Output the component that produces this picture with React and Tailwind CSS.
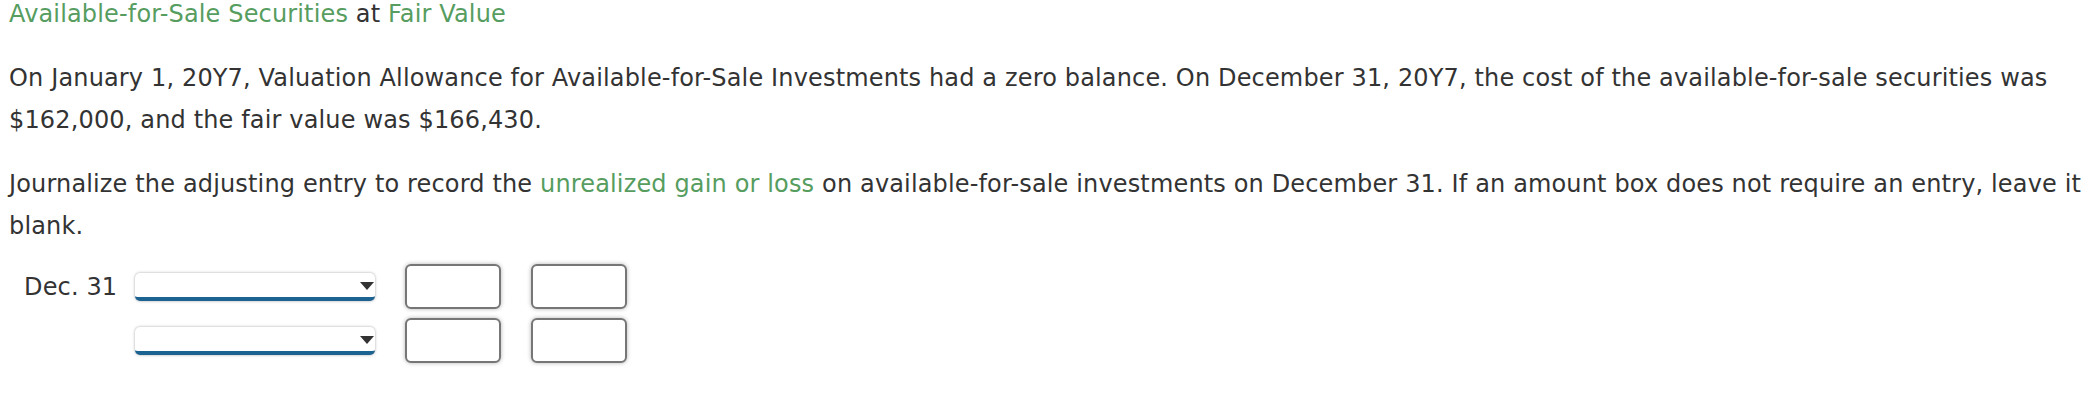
import { useState } from "react";

const green = "text-[#569d5f]";

function AccountSelect() {
  return (
    <div className="relative h-[28px] w-[240px] rounded-[5px] border-b-4 border-[#1c6392] bg-white shadow-[0_0_3px_rgba(0,0,0,0.35)]">
      <span className="absolute right-[1px] top-[9px] h-0 w-0 border-x-[7px] border-t-[8px] border-x-transparent border-t-[#333]" />
    </div>
  );
}

function AmountBox({ value, onChange }) {
  return (
    <input
      type="text"
      value={value}
      onChange={(e) => onChange(e.target.value)}
      className="ml-[30px] h-[45px] w-[96px] rounded-[6px] border-2 border-[#767676] bg-white px-2 text-[22px] shadow-[0_0_4px_rgba(0,0,0,0.3)] outline-none"
    />
  );
}

export default function App() {
  const [amounts, setAmounts] = useState(["", "", "", ""]);

  const setAmount = (i, v) => {
    const next = [...amounts];
    next[i] = v;
    setAmounts(next);
  };

  return (
    <div className="min-h-[412px] bg-white pl-[9px] pr-[6px] font-['DejaVu_Sans','Liberation_Sans',sans-serif] tracking-[0.15px] text-[#333]">
      <h1 className="text-[24px] leading-[29px]">
        <span className={green}>Available-for-Sale Securities</span> at{" "}
        <span className={green}>Fair Value</span>
      </h1>

      <p className="mt-[28px] text-[24px] leading-[42px]">
        On January 1, 20Y7, Valuation Allowance for Available-for-Sale Investments had a zero balance. On
        December 31, 20Y7, the cost of the available-for-sale securities was $162,000, and the fair value was
        $166,430.
      </p>

      <p className="mt-[22px] text-[24px] leading-[42px]">
        Journalize the adjusting entry to record the{" "}
        <span className={green}>unrealized gain or loss</span> on available-for-sale investments on December
        31. If an amount box does not require an entry, leave it blank.
      </p>

      <div className="mt-[17px] flex flex-col gap-[9px]">
        <div className="flex items-center">
          <div className="w-[126px] pl-[15px] text-[24px] leading-[28px]">Dec. 31</div>
          <AccountSelect />
          <AmountBox value={amounts[0]} onChange={(v) => setAmount(0, v)} />
          <AmountBox value={amounts[1]} onChange={(v) => setAmount(1, v)} />
        </div>
        <div className="flex items-center">
          <div className="w-[126px]" />
          <AccountSelect />
          <AmountBox value={amounts[2]} onChange={(v) => setAmount(2, v)} />
          <AmountBox value={amounts[3]} onChange={(v) => setAmount(3, v)} />
        </div>
      </div>
    </div>
  );
}
